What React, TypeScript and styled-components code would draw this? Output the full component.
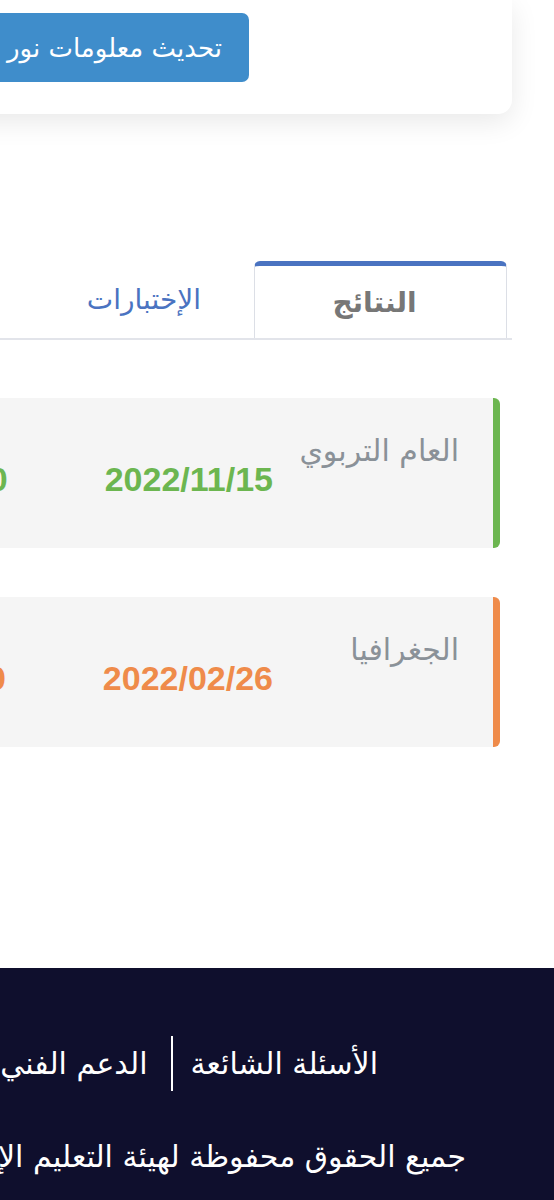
import React from 'react';
import styled, { createGlobalStyle } from 'styled-components';

interface ResultItem {
  id: string;
  subject: string;
  date: string;
  score: string;
  tone: 'success' | 'warning';
}

const results: ResultItem[] = [
  { id: 'r1', subject: 'العام التربوي', date: '2022/11/15', score: '100', tone: 'success' },
  { id: 'r2', subject: 'الجغرافيا', date: '2022/02/26', score: '80', tone: 'warning' },
];

const toneColors = {
  success: '#6cb650',
  warning: '#ef8b4a',
};

const GlobalStyle = createGlobalStyle`
  html, body {
    margin: 0;
    padding: 0;
    background: #fff;
  }

  body {
    direction: rtl;
    font-family: "DejaVu Sans", "Liberation Sans", sans-serif;
    overflow-x: hidden;
  }
`;

// Styled Components
const Viewport = styled.div`
  width: 100%;
  overflow: hidden;
`;

const Page = styled.div`
  width: 1000px;
  min-height: 1200px;
  display: flex;
  flex-direction: column;
`;

const Main = styled.main`
  padding: 0 42px 0 0;
  display: flex;
  flex-direction: column;
`;

const ProfileCard = styled.section`
  background: #fff;
  border-radius: 0 0 14px 14px;
  box-shadow: 0 8px 28px rgba(0, 0, 0, 0.09);
  padding: 13px 263px 32px 0;
  display: flex;
`;

const UpdateButton = styled.button`
  height: 69px;
  padding: 0 27px;
  border: none;
  border-radius: 7px;
  background: #3f8dcb;
  color: #fff;
  font-family: inherit;
  font-size: 26px;
  white-space: nowrap;
  cursor: pointer;
`;

const TabList = styled.div`
  margin-top: 147px;
  display: flex;
  border-bottom: 2px solid #e2e4ea;
  padding-right: 5px;
`;

const Tab = styled.button<{ $active?: boolean }>`
  height: 77px;
  box-sizing: border-box;
  font-family: inherit;
  font-size: 28px;
  cursor: pointer;
  background: #fff;
  width: ${({ $active }) => ($active ? '253px' : 'auto')};
  padding: ${({ $active }) => ($active ? '0 12px 0 0' : '0 53px')};
  color: ${({ $active }) => ($active ? '#777' : '#4a73c1')};
  font-weight: ${({ $active }) => ($active ? 600 : 400)};
  border: ${({ $active }) => ($active ? '1px solid #dcdfe6' : 'none')};
  border-top: ${({ $active }) => ($active ? '5px solid #4a73c1' : 'none')};
  border-bottom: none;
  border-radius: 6px 6px 0 0;
`;

const ResultList = styled.div`
  margin-top: 58px;
  padding-right: 12px;
  display: flex;
  flex-direction: column;
  gap: 49px;
`;

const ResultCard = styled.div<{ $color: string }>`
  height: 150px;
  box-sizing: border-box;
  background: #f5f5f5;
  border-right: 7px solid ${({ $color }) => $color};
  border-radius: 6px;
  padding: 35px 34px 0 0;
  display: flex;
  align-items: flex-start;
`;

const Subject = styled.div`
  width: 186px;
  flex-shrink: 0;
  color: #8a9198;
  font-size: 30px;
  line-height: 36px;
`;

const Value = styled.div<{ $color: string }>`
  margin-top: 27px;
  margin-left: 97px;
  direction: ltr;
  color: ${({ $color }) => $color};
  font-family: "Liberation Sans", Arial, sans-serif;
  font-weight: 700;
  font-size: 34px;
  line-height: 39px;
  white-space: nowrap;
`;

const Footer = styled.footer`
  margin-top: auto;
  background: #0f0f2d;
  color: #fff;
  padding: 68px 0 20px;
  min-height: 232px;
  box-sizing: border-box;
`;

const FooterLinks = styled.nav`
  display: flex;
  align-items: center;
  padding-right: 176px;
  height: 55px;
`;

const FooterLink = styled.a`
  color: #fff;
  font-size: 30px;
  text-decoration: none;
  white-space: nowrap;
`;

const LinkDivider = styled.span`
  width: 2px;
  height: 55px;
  background: #fff;
  margin: 0 18px 0 23px;
`;

const Copyright = styled.p`
  margin: 48px 0 0;
  padding-right: 88px;
  font-size: 30px;
  line-height: 36px;
  white-space: nowrap;
`;

export default function App() {
  return (
    <Viewport>
      <GlobalStyle />
      <Page>
        <Main>
          <ProfileCard>
            <UpdateButton>تحديث معلومات نور الشخصية</UpdateButton>
          </ProfileCard>

          <TabList>
            <Tab $active>النتائج</Tab>
            <Tab>الإختبارات</Tab>
          </TabList>

          <ResultList>
            {results.map((item) => (
              <ResultCard key={item.id} $color={toneColors[item.tone]}>
                <Subject>{item.subject}</Subject>
                <Value $color={toneColors[item.tone]}>{item.date}</Value>
                <Value $color={toneColors[item.tone]}>{item.score}</Value>
              </ResultCard>
            ))}
          </ResultList>
        </Main>

        <Footer>
          <FooterLinks>
            <FooterLink href="#">الأسئلة الشائعة</FooterLink>
            <LinkDivider />
            <FooterLink href="#">الدعم الفني</FooterLink>
          </FooterLinks>
          <Copyright>جميع الحقوق محفوظة لهيئة التعليم الإلكتروني © 2022</Copyright>
        </Footer>
      </Page>
    </Viewport>
  );
}
